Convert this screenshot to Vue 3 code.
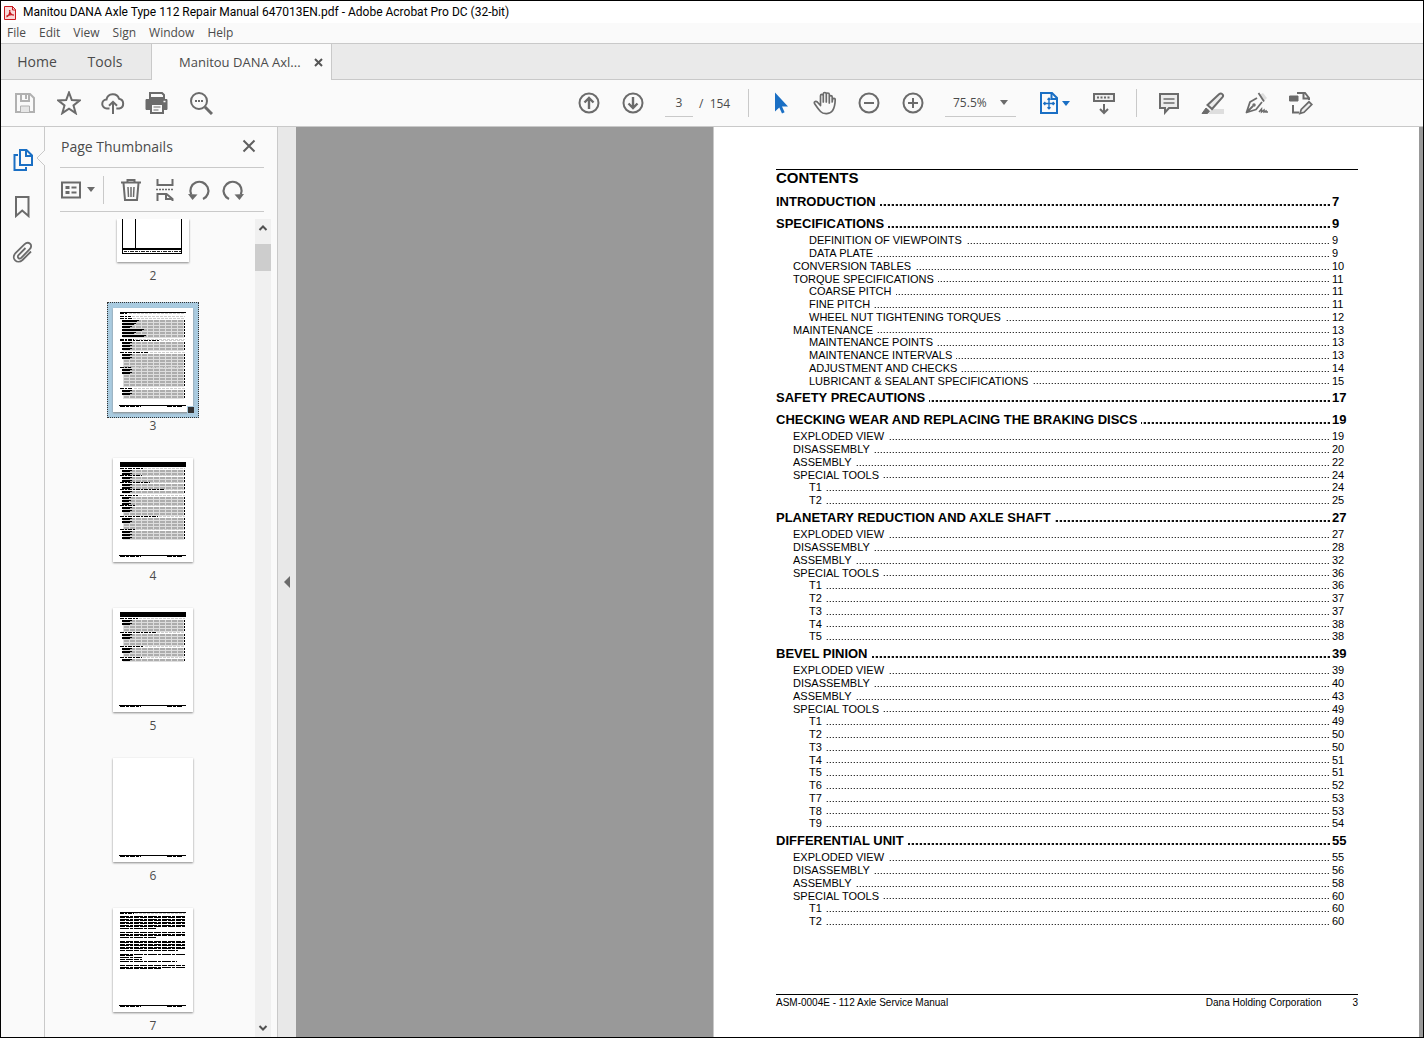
<script setup>
import { ref } from 'vue'

const menus = ['File', 'Edit', 'View', 'Sign', 'Window', 'Help']
const page = ref('3')
const zoom = ref('75.5%')

const basics = (...pages) =>
  ['EXPLODED VIEW', 'DISASSEMBLY', 'ASSEMBLY', 'SPECIAL TOOLS'].map((name, i) => [1, name, pages[i]])
const tools = (...pages) => pages.map((p, i) => [2, 'T' + (i + 1), p])

const sections = [
  { name: 'INTRODUCTION', page: 7, lines: [] },
  {
    name: 'SPECIFICATIONS',
    page: 9,
    lines: [
      [2, 'DEFINITION OF VIEWPOINTS', 9],
      [2, 'DATA PLATE', 9],
      [1, 'CONVERSION TABLES', 10],
      [1, 'TORQUE SPECIFICATIONS', 11],
      [2, 'COARSE PITCH', 11],
      [2, 'FINE PITCH', 11],
      [2, 'WHEEL NUT TIGHTENING TORQUES', 12],
      [1, 'MAINTENANCE', 13],
      [2, 'MAINTENANCE POINTS', 13],
      [2, 'MAINTENANCE INTERVALS', 13],
      [2, 'ADJUSTMENT AND CHECKS', 14],
      [2, 'LUBRICANT & SEALANT SPECIFICATIONS', 15]
    ]
  },
  { name: 'SAFETY PRECAUTIONS', page: 17, lines: [] },
  {
    name: 'CHECKING WEAR AND REPLACING THE BRAKING DISCS',
    page: 19,
    lines: [...basics(19, 20, 22, 24), ...tools(24, 25)]
  },
  {
    name: 'PLANETARY REDUCTION AND AXLE SHAFT',
    page: 27,
    lines: [...basics(27, 28, 32, 36), ...tools(36, 37, 37, 38, 38)]
  },
  {
    name: 'BEVEL PINION',
    page: 39,
    lines: [...basics(39, 40, 43, 49), ...tools(49, 50, 50, 51, 51, 52, 53, 53, 54)]
  },
  {
    name: 'DIFFERENTIAL UNIT',
    page: 55,
    lines: [...basics(55, 56, 58, 60), ...tools(60, 60)]
  }
]

// Thumbnail drawings: heads are [y, width]; bands are [y, rows, label width]
const thumbs = [
  {
    n: 3,
    top: 1,
    heads: [[5, 8], [8, 11], [10, 12], [31, 14], [32, 40], [44, 29], [59, 11], [80, 13]],
    bands: [[12, 1, 17], [15, 1, 14], [18, 1, 10], [21, 1, 22], [24, 1, 14], [27, 1, 24], [34, 3, 10], [46, 2, 10], [52, 3, 0], [61, 2, 10], [67, 4, 0], [82, 2, 10], [88, 1, 0]]
  },
  {
    n: 4,
    top: 5,
    heads: [[10, 23], [17, 22], [24, 30], [31, 45], [37, 18], [47, 15], [58, 38], [71, 15]],
    bands: [[12, 2, 10], [19, 2, 10], [26, 2, 10], [33, 1, 10], [39, 3, 9], [49, 2, 10], [55, 1, 0], [60, 2, 10], [66, 2, 0], [73, 3, 10]]
  },
  {
    n: 5,
    top: 5,
    heads: [[10, 18], [24, 36], [38, 24], [49, 22]],
    bands: [[12, 2, 10], [18, 2, 0], [26, 2, 10], [32, 2, 0], [40, 2, 10], [46, 1, 0], [51, 1, 10]]
  },
  { n: 6, top: 0, heads: [], bands: [] },
  {
    n: 7,
    top: 1,
    heads: [[5, 14]],
    bands: [],
    text: [
      [8, 65], [9, 65], [11, 65], [12, 65], [14, 65], [15, 65], [17, 65], [18, 65], [20, 36],
      [24, 65], [26, 65], [27, 65], [29, 36],
      [33, 65], [34, 65], [36, 65], [37, 65], [39, 65], [40, 65], [42, 58],
      [46, 65], [47, 13], [49, 22], [51, 22], [53, 57], [57, 65], [59, 65], [60, 41]
    ]
  }
]
</script>

<template>
  <div class="window">
    <header class="titlebar">
      <svg width="12" height="15" viewBox="0 0 12 15">
        <path d="M.5 1.500h8l3 3v10H.5z" fill="#f9dada" stroke="#c8191e" />
        <path d="M8.500 1v4h3" fill="none" stroke="#c8191e" />
        <path d="M2.500 12c2-1 3.500-4 3.300-7M5.500 5c.3 3 2 5 4.200 5.400M2.500 11.200c2-1.500 4.500-2 7.200-1.300" fill="none" stroke="#c8191e" stroke-width="1.200" />
      </svg>
      <h1>Manitou DANA Axle Type 112 Repair Manual 647013EN.pdf - Adobe Acrobat Pro DC (32-bit)</h1>
    </header>

    <nav class="menubar">
      <button v-for="m in menus" :key="m">{{ m }}</button>
    </nav>

    <div class="tabs">
      <button class="home">Home</button>
      <button class="tools">Tools</button>
      <div class="tab">
        <span>Manitou DANA Axl...</span>
        <button aria-label="Close tab">
          <svg width="9" height="9" viewBox="0 0 9 9"><path d="M1 1l7 7M8 1L1 8" stroke="#555" stroke-width="2" /></svg>
        </button>
      </div>
    </div>

    <div class="toolbar">
      <div class="group">
        <button aria-label="Save">
          <svg class="ic" viewBox="0 0 24 24"><g stroke="#b1b1b1" fill="none" stroke-width="2"><path d="M3 3h14l4 4v14H3z" /><path d="M8 3v7h8V3M13 4v4" /><path d="M7.500 21v-6h9v6" fill="#e6e6e6" stroke-width="1" /></g></svg>
        </button>
        <button aria-label="Star">
          <svg class="ic" viewBox="0 0 24 24"><path d="M12 1.500l2.800 7.600 8.100.3-6.400 5 2.200 7.800-6.700-4.500-6.700 4.500 2.200-7.800-6.400-5 8.100-.3z" /></svg>
        </button>
        <button aria-label="Upload">
          <svg class="ic" viewBox="0 0 24 24"><path d="M8.500 17.500H6a4.500 4.500 0 0 1-.5-9 6.500 6.500 0 0 1 12.500-.8 5 5 0 0 1 .3 9.800h-3" /><path d="M12 23V11M8 14.800l4-4 4 4" /></svg>
        </button>
        <button aria-label="Print">
          <svg class="ic" viewBox="0 0 24 24"><path d="M5 7V2h12l2 2v3z" fill="#fafafa" /><path d="M1 8.500h21v10H1z" fill="#6b6b6b" stroke-linejoin="round" stroke-width="1" /><path d="M6 13h12v9H6z" fill="#fafafa" /><path d="M8.500 16h7M8.500 19h5" stroke-width="1" /><path d="M18.500 10.500h2" stroke="#fff" stroke-width="1.500" /></svg>
        </button>
        <button aria-label="Find">
          <svg class="ic" viewBox="0 0 24 24"><circle cx="10" cy="10" r="8" /><path d="M16 16l7 7" stroke-width="3" /><path d="M6 10h2M9 10h2M12 10h2" /></svg>
        </button>
      </div>

      <div class="group middle">
        <button aria-label="Previous page">
          <svg class="ic" viewBox="0 0 24 24"><circle cx="12" cy="12" r="9.500" /><path d="M12 18V7M7.500 11.500L12 7l4.500 4.500" stroke-width="2.400" /></svg>
        </button>
        <button aria-label="Next page">
          <svg class="ic" viewBox="0 0 24 24"><circle cx="12" cy="12" r="9.500" /><path d="M12 6v11M7.500 12.500L12 17l4.500-4.500" stroke-width="2.400" /></svg>
        </button>
        <input v-model="page" class="pageno" aria-label="Page number" />
        <span class="total">/&nbsp; 154</span>
        <i class="sep"></i>
        <button aria-label="Select">
          <svg class="ic" viewBox="0 0 24 24"><path d="M6 1.500v19l4.300-4 2.700 6 2.600-1.200-2.600-5.800h6z" fill="#1a6fc4" stroke="none" /></svg>
        </button>
        <button aria-label="Hand">
          <svg class="ic" viewBox="0 0 24 24"><path stroke-width="1.700" stroke-linejoin="round" d="M7.500 14.500V4.800c0-2 2.800-2 2.800 0V11 3c0-2 3-2 3 0v8V3.500c0-2 3-2 3 0V12 6c0-1.800 2.900-1.800 2.900 0v5l.3-2.500c.3-1.800 2.800-1.500 2.700.2-.1 5-.7 8-2.700 11-2 3.500-9 4-12 .8C5 18 3.500 15.500 1.500 12.500.8 10.500 3 9.800 4.500 11.200z" /></svg>
        </button>
        <button aria-label="Zoom out">
          <svg class="ic" viewBox="0 0 24 24"><circle cx="12" cy="12" r="9.500" /><path d="M7 12h10" /></svg>
        </button>
        <button aria-label="Zoom in">
          <svg class="ic" viewBox="0 0 24 24"><circle cx="12" cy="12" r="9.500" /><path d="M7 12h10M12 7v10" /></svg>
        </button>
        <div class="zoom">
          <select v-model="zoom" aria-label="Zoom level"><option>75.5%</option><option>100%</option></select>
          <svg class="caret" width="8" height="5" viewBox="0 0 8 5"><path d="M0 0h8L4 5z" fill="#6b6b6b" /></svg>
        </div>
        <button class="fit" aria-label="Fit page">
          <svg class="ic blue" viewBox="0 0 24 24"><path d="M4 2h11l5 5v15H4z" /><path d="M14.500 2v6H20" /><path d="M12 7.500v10M7 12.500h10M10.500 8.800L12 7.300l1.500 1.500M10.500 16.200l1.500 1.500 1.500-1.500M8.300 11l-1.500 1.500L8.300 14M15.700 11l1.500 1.500-1.500 1.500" stroke-width="1.400" /></svg>
          <svg width="8" height="5" viewBox="0 0 8 5"><path d="M0 0h8L4 5z" fill="#1a6fc4" /></svg>
        </button>
        <button class="scroll" aria-label="Scrolling">
          <svg class="ic" viewBox="0 0 24 24"><path d="M2 3h20v7H2z" fill="#eee" /><path d="M5 6.500h14" stroke-dasharray="2 1.500" /><path d="M12 13v9M8 18l4 4 4-4" /></svg>
        </button>
        <i class="sep"></i>
        <button aria-label="Comment">
          <svg class="ic" viewBox="0 0 24 24"><path d="M3 3h18v14H12l-4 4.500V17H3z" fill="#ececec" /><path d="M6.500 8h11M6.500 12h11" stroke-width="1.400" /></svg>
        </button>
        <button aria-label="Highlight">
          <svg class="ic" viewBox="0 0 24 24"><path d="M11 18h12v5H7z" fill="#dedede" stroke="none" /><path d="M6.500 14L18 3.200c2.400-2 5.200.8 3.500 3L11 18z" fill="#ececec" /><path d="M1 22.500L5 17l3.500 3-2 2.500z" fill="#6b6b6b" stroke-width="1" /></svg>
        </button>
        <button aria-label="Sign">
          <svg class="ic" viewBox="0 0 24 24"><path d="M14 4l4-2 4 5-3 3z" fill="#dedede" stroke="none" /><path d="M13.500 2l5.500 8.500M12 7L5 11 1.500 21.500l9.500-3 6-7.500M1.500 21.500L8 15" stroke-linejoin="round" stroke-width="1.800" /><circle cx="9" cy="14" r="1" stroke-width="1.500" /><path d="M14 21l2.500-3v3l2.500-2v2l2-1v1h2" stroke-width="1.500" /></svg>
        </button>
        <button aria-label="Edit PDF">
          <svg class="ic" viewBox="0 0 24 24"><path d="M8 2h8l4 5v2M14.500 2v5.500H20M4 14v7.500h6" /><path d="M.5 5H9v5H.5z" fill="#6b6b6b" stroke-width="1" /><path d="M11 22.500l1.200-4L20 10.800l2.800 2.800L15 21.300z" fill="#eee" stroke-width="1.700" /></svg>
        </button>
      </div>
    </div>

    <main>
      <aside class="rail">
        <button class="active" aria-label="Page thumbnails">
          <svg class="ic blue" viewBox="0 0 24 24"><path d="M9 2h6.500L21 7.500V17H9z" /><path d="M15 2v6h6M7 7H3.500v15H15v-3" /></svg>
        </button>
        <button aria-label="Bookmarks">
          <svg class="ic" viewBox="0 0 24 24"><path d="M5 3h12.500v19L11.200 16.500 5 22z" /></svg>
        </button>
        <button aria-label="Attachments">
          <svg class="ic" viewBox="0 0 24 24"><path d="M14.500 8L7.500 15.200c-2 2 .8 4.500 2.700 2.700l8.500-8.700c4-4.200-1.200-8.700-5.300-4.800L4.500 13.200c-5 5.500 1.800 11.500 7 6.800l8.500-8.500" stroke-width="1.800" /></svg>
        </button>
        <svg class="notch" width="9" height="20" viewBox="0 0 9 20"><path d="M9 0v2L1 10l8 8v2" fill="#fafafa" stroke="#c9c9c9" /></svg>
      </aside>

      <section class="panel">
        <div class="panelhead">
          <h2>Page Thumbnails</h2>
          <button aria-label="Close panel">
            <svg width="14" height="14" viewBox="0 0 14 14"><path d="M1.500 1.500l11 11M12.500 1.500l-11 11" stroke="#5f5f5f" stroke-width="2" /></svg>
          </button>
        </div>
        <div class="paneltools">
          <button class="options" aria-label="Options">
            <svg width="20" height="18" viewBox="0 0 20 18" fill="none" stroke="#6b6b6b" stroke-width="2"><path d="M1 1.500h18v15H1z" /><path d="M4.500 6.500h4M4.500 11.500h4" stroke-width="3" /><path d="M10.500 6.500h5M10.500 11.500h5" /></svg>
            <svg width="8" height="5" viewBox="0 0 8 5"><path d="M0 0h8L4 5z" fill="#6b6b6b" /></svg>
          </button>
          <i class="psep"></i>
          <button aria-label="Delete pages">
            <svg class="ic" viewBox="0 0 24 24"><path d="M2 4.500h20M8.500 4.500V2h7v2.500M4.500 5l1.500 17h12l1.500-17" /><path d="M9 9l.5 10M12 9v10M15 9l-.5 10" stroke-width="1.500" /></svg>
          </button>
          <button aria-label="Insert pages">
            <svg class="ic" viewBox="0 0 24 24"><path d="M4.500 1v6h15V1M4.500 23v-7h9l6 5v2M13 16v5h6" /><path d="M3 11.500h18" stroke-dasharray="2 1" stroke-width="1.500" /></svg>
          </button>
          <button aria-label="Rotate left">
            <svg class="ic" viewBox="0 0 24 24"><path d="M16 21A9 9 0 1 0 4.200 16.500" stroke-width="2.200" /><path d="M1 16l9.500.5-5 5.500z" fill="#6b6b6b" stroke="none" /></svg>
          </button>
          <button aria-label="Rotate right">
            <svg class="ic" viewBox="0 0 24 24"><path d="M8 21A9 9 0 1 1 19.800 16.500" stroke-width="2.200" /><path d="M23 16l-9.500.5 5 5.500z" fill="#6b6b6b" stroke="none" /></svg>
          </button>
        </div>
        <div class="panelbody">
          <div class="thumbs">
            <figure class="cut">
              <div class="frame">
                <svg class="sheet" width="72" height="43" viewBox="0 0 72 43" shape-rendering="crispEdges"><path d="M0 0h72v43H0z" fill="#fff" /><path d="M5 0h1v35H5zM18 0h1v30h-1zM64 0h1v35h-1zM5 29h60v2H5zM5 34h60v1H5z" /><path d="M7 32.500h57" stroke="#222" stroke-dasharray="3 1 1 1 4 1" /></svg>
              </div>
              <figcaption>2</figcaption>
            </figure>
            <figure v-for="t in thumbs" :key="t.n" :class="{ selected: t.n === 3 }">
              <div class="frame">
                <svg class="sheet" width="80" height="104" viewBox="0 0 80 104" shape-rendering="crispEdges">
                  <path d="M0 0h80v104H0z" fill="#fff" />
                  <rect v-if="t.top" x="7" y="4" width="66" :height="t.top" />
                  <g v-for="b in t.bands" :key="b[0]">
                    <g v-for="i in b[1]" :key="i">
                      <rect x="10" :y="b[0] + 3 * i - 3" width="61" height="3" fill="#dedede" />
                      <path :d="`M11 ${b[0] + 3 * i - 2}h60`" stroke="#adadad" stroke-width="2" stroke-dasharray="5 1" />
                      <rect x="71" :y="b[0] + 3 * i - 3" width="1" height="2" />
                      <rect v-if="b[2]" x="9" :y="b[0] + 3 * i - 3" :width="b[2]" height="1" />
                      <rect v-if="b[2]" x="9" :y="b[0] + 3 * i - 2" :width="b[2] - 2" height="1" />
                    </g>
                  </g>
                  <g v-for="h in t.heads" :key="h[0]" stroke="#000">
                    <path :d="`M${8 + h[1]} ${h[0] + 0.5}H72`" stroke="#ccc" stroke-dasharray="3 1" />
                    <path :d="`M7 ${h[0] + 0.5}h${h[1]}`" stroke-dasharray="4 1 2 1" />
                  </g>
                  <path v-for="(l, i) in t.text" :key="i" :d="`M7 ${l[0] + 0.5}h${l[1]}`" stroke="#000" :stroke-dasharray="i % 2 ? '5 1 7 1' : '9 1 3 1'" />
                  <path d="M6 97h67v1H6z" />
                  <path d="M7 98.500h21M54 98.500h15" stroke="#000" stroke-dasharray="5 1 3 1" />
                </svg>
                <i v-if="t.n === 3" class="grip"></i>
              </div>
              <figcaption>{{ t.n }}</figcaption>
            </figure>
          </div>
          <div class="scrollbar">
            <svg width="16" height="18" viewBox="0 0 16 18"><path d="M4.500 11L8 7.500l3.500 3.500" fill="none" stroke="#505050" stroke-width="2" /></svg>
            <i></i>
            <svg width="16" height="18" viewBox="0 0 16 18"><path d="M4.500 7L8 10.500 11.500 7" fill="none" stroke="#505050" stroke-width="2" /></svg>
          </div>
        </div>
      </section>

      <button class="collapse" aria-label="Collapse panel">
        <svg width="6" height="12" viewBox="0 0 6 12"><path d="M6 0v12L0 6z" fill="#6b6b6b" /></svg>
      </button>

      <div class="canvas">
        <article class="page">
          <div class="sheetbody">
            <h2>CONTENTS</h2>
            <section v-for="s in sections" :key="s.name" :class="{ lone: !s.lines.length }">
              <h3 class="line"><span>{{ s.name }}</span><span class="dots"></span><span class="num">{{ s.page }}</span></h3>
              <div class="subs">
                <p v-for="(l, i) in s.lines" :key="i" class="line" :class="'level' + l[0]">
                  <span>{{ l[1] }}</span><span class="dots"></span><span class="num">{{ l[2] }}</span>
                </p>
              </div>
            </section>
          </div>
          <footer>
            <span>ASM-0004E - 112 Axle Service Manual</span>
            <span class="corp">Dana Holding Corporation</span>
            <span>3</span>
          </footer>
        </article>
      </div>
    </main>
  </div>
</template>

<style>
body {
  margin: 0;
}
</style>

<style scoped>
* {
  box-sizing: border-box;
}
.window {
  height: 100vh;
  display: flex;
  flex-direction: column;
  border: 1px solid #000;
  background: #fafafa;
  color: #4b4b4b;
  font-family: "Open Sans", "Noto Sans", sans-serif;
  overflow: hidden;
}
button {
  padding: 0;
  border: 0;
  background: none;
  color: inherit;
  font: inherit;
  display: flex;
  align-items: center;
  justify-content: center;
}
h1, h2, h3, p, figure {
  margin: 0;
  font-weight: 400;
}
svg {
  display: block;
  flex: none;
}
.ic {
  width: 24px;
  height: 24px;
  fill: none;
  stroke: #6b6b6b;
  stroke-width: 2;
}
.blue {
  stroke: #1a6fc4;
}
.titlebar {
  flex: none;
  height: 22px;
  padding-left: 3px;
  display: flex;
  align-items: center;
  gap: 7px;
  background: #fff;
}
h1 {
  color: #000;
  font-family: Roboto, "Open Sans", sans-serif;
  font-size: 12px;
  white-space: nowrap;
}
.menubar {
  flex: none;
  height: 20px;
  padding: 0 0 2px 6px;
  display: flex;
  gap: 13px;
  font-size: 12px;
}
.tabs {
  flex: none;
  height: 37px;
  display: flex;
  border-top: 1px solid #c9c9c9;
  border-bottom: 1px solid #c9c9c9;
  background: #eaeaea;
  font-size: 14px;
}
.home {
  width: 72px;
}
.tools {
  width: 64px;
}
.tab {
  width: 181px;
  height: 36px;
  margin-left: 14px;
  padding: 0 8px 0 27px;
  display: flex;
  align-items: center;
  justify-content: space-between;
  border: 1px solid #c9c9c9;
  border-width: 0 1px;
  background: #fafafa;
  font-size: 13px;
}
.toolbar {
  flex: none;
  height: 47px;
  padding: 0 100px 0 2px;
  display: flex;
  justify-content: space-between;
  border-bottom: 1px solid #c9c9c9;
}
.group {
  display: flex;
  align-items: center;
}
.group button {
  width: 44px;
  height: 44px;
}
.pageno {
  width: 28px;
  height: 28px;
  margin-left: 10px;
  padding: 0;
  border: 0;
  border-bottom: 1px solid #c9c9c9;
  background: none;
  color: inherit;
  font: 12px "Open Sans", sans-serif;
  text-align: center;
}
.total {
  width: 39px;
  margin-left: 6px;
  font-size: 12px;
  white-space: nowrap;
}
.sep {
  width: 1px;
  height: 28px;
  margin: 0 10px;
  background: #c9c9c9;
}
.zoom {
  width: 71px;
  height: 28px;
  margin-left: 10px;
  display: flex;
  align-items: center;
  border-bottom: 1px solid #c9c9c9;
}
.zoom select {
  width: 55px;
  padding: 0 0 0 8px;
  border: 0;
  appearance: none;
  background: none;
  color: inherit;
  font: 12px "Open Sans", sans-serif;
}
.group .fit {
  width: 58px;
  margin-left: 8px;
  gap: 1px;
}
main {
  flex: 1;
  min-height: 0;
  display: flex;
}
.rail {
  position: relative;
  flex: none;
  width: 44px;
  padding-top: 10px;
  border-right: 1px solid #c9c9c9;
}
.rail button {
  width: 43px;
  height: 46px;
}
.notch {
  position: absolute;
  right: -1px;
  top: 21px;
}
.panel {
  flex: none;
  width: 233px;
  display: flex;
  flex-direction: column;
  border-right: 1px solid #c9c9c9;
}
.panelhead {
  height: 41px;
  margin: 0 13px 0 15px;
  padding: 0 8px 2px 1px;
  display: flex;
  align-items: center;
  justify-content: space-between;
  border-bottom: 1px solid #c9c9c9;
}
.panelhead h2 {
  font-size: 14px;
}
.paneltools {
  height: 44px;
  margin: 0 13px 0 15px;
  display: flex;
  align-items: center;
  border-bottom: 1px solid #c9c9c9;
}
.paneltools button {
  width: 34px;
}
.paneltools .options {
  gap: 6px;
  margin-left: 1px;
}
.psep {
  width: 1px;
  height: 28px;
  margin: 0 10px 0 8px;
  background: #c9c9c9;
}
.panelbody {
  flex: 1;
  min-height: 0;
  margin-top: 7px;
  padding-right: 6px;
  display: flex;
}
.thumbs {
  flex: 1;
  padding-left: 6px;
  overflow: hidden;
}
figure {
  margin-bottom: 18px;
  display: flex;
  flex-direction: column;
  align-items: center;
}
.frame {
  position: relative;
  padding: 6px;
}
.cut .frame {
  padding-top: 0;
}
.selected .frame {
  background: #a9cbe0;
  outline: 1px dotted #333;
  outline-offset: -1px;
}
.sheet {
  box-shadow: 0 1px 2px #888;
}
.grip {
  position: absolute;
  right: 4px;
  bottom: 4px;
  width: 8px;
  height: 8px;
  border: 1px solid #a9cbe0;
  background: #333;
}
figcaption {
  font-size: 12px;
  line-height: 16px;
}
.scrollbar {
  flex: none;
  width: 16px;
  display: flex;
  flex-direction: column;
  background: #f0f0f0;
}
.scrollbar i {
  height: 27px;
  margin: 7px 0 auto;
  background: #cdcdcd;
}
.collapse {
  flex: none;
  width: 18px;
  background: #e8e8e8;
}
.canvas {
  flex: 1;
  min-width: 0;
  padding-right: 4px;
  display: flex;
  justify-content: flex-end;
  background: #999;
}
.page {
  width: 706px;
  padding: 42px 61px 27px 62px;
  display: flex;
  flex-direction: column;
  justify-content: space-between;
  border-left: 1px solid #c9c9c9;
  background: #fff;
  color: #000;
  font-family: "Liberation Sans", Arial, sans-serif;
}
.page h2 {
  margin-bottom: 5px;
  border-top: 1px solid #000;
  font-size: 15px;
  font-weight: 700;
  line-height: 16px;
}
.line {
  display: flex;
  font-size: 11px;
  line-height: 13px;
  white-space: nowrap;
}
.subs .line:nth-child(4n) {
  line-height: 12px;
}
h3.line {
  padding: 3px 0;
  font-size: 13px;
  font-weight: 700;
  line-height: 15px;
}
.lone {
  margin-bottom: 1px;
}
.level1 {
  padding-left: 17px;
}
.level2 {
  padding-left: 33px;
}
.dots {
  flex: 1;
  height: 1px;
  margin: 0 3px 3px 4px;
  align-self: flex-end;
  background: repeating-linear-gradient(to left, #333 0 1px, #bbb 1px 2px, #fff 2px 3px);
}
h3 .dots {
  height: 2px;
  margin-right: 2px;
  background: repeating-linear-gradient(to left, #111 0 2px, #bbb 2px 3px, #fff 3px 4px);
}
.num {
  width: 26px;
}
footer {
  padding-top: 1px;
  display: flex;
  border-top: 1px solid #000;
  font-size: 10px;
  line-height: 14px;
}
.corp {
  margin: 0 31px 0 auto;
}
</style>
